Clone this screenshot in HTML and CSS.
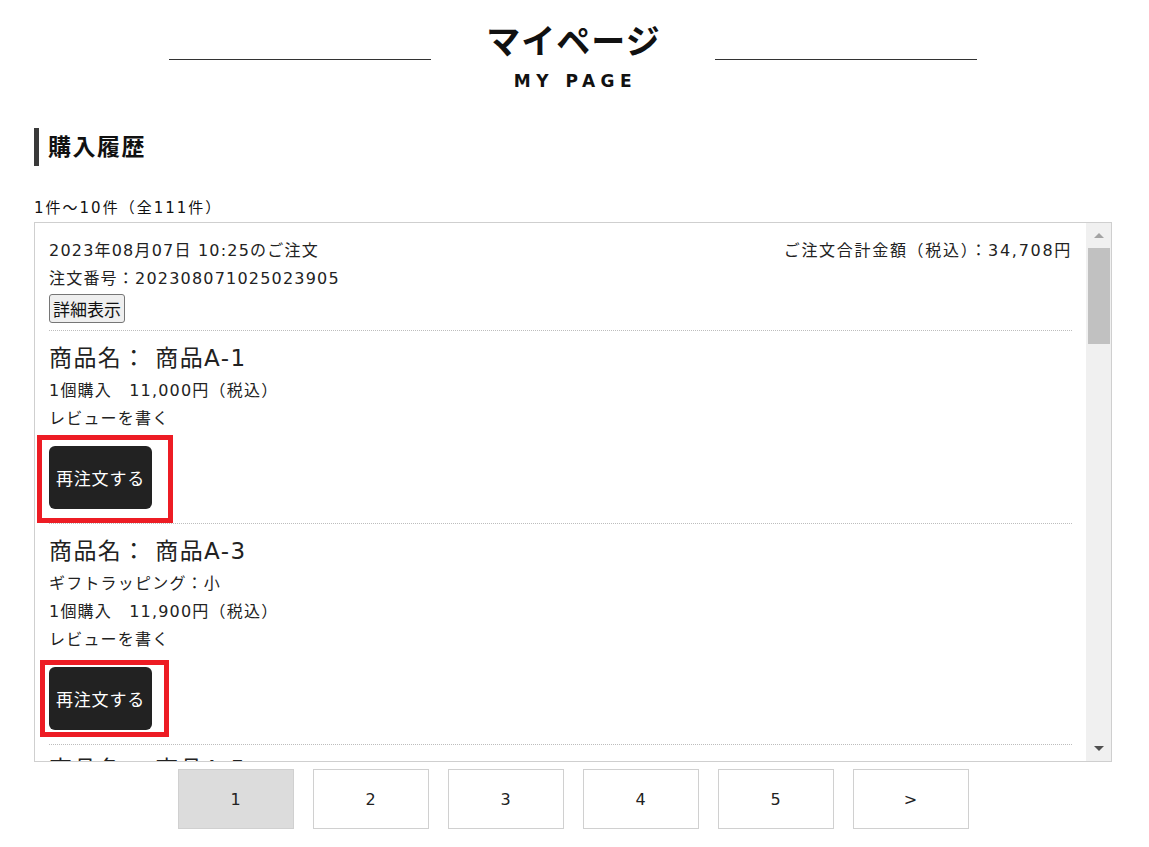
FILE: index.html
```html
<!DOCTYPE html>
<html lang="ja">
<head>
<meta charset="utf-8">
<title>マイページ</title>
<link rel="stylesheet" href="styles.css">
</head>
<body>
<div class="page">
  <header class="page-title">
    <span class="rule"></span>
    <div class="title-text">
      <h1>マイページ</h1>
      <p class="title-en">MY PAGE</p>
    </div>
    <span class="rule"></span>
  </header>

  <h2 class="section-head">購入履歴</h2>
  <p class="count">1件～10件（全111件）</p>

  <div class="history">
    <div class="history-scroll">
      <div class="order">
        <div class="order-head">
          <div class="order-meta">
            <p>2023年08月07日 10:25のご注文</p>
            <p>注文番号：202308071025023905</p>
            <button class="detail-btn" type="button">詳細表示</button>
          </div>
          <p class="order-total">ご注文合計金額（税込）：34,708円</p>
        </div>

        <div class="item">
          <p class="item-name">商品名： 商品A-1</p>
          <p class="item-line">1個購入　11,000円（税込）</p>
          <p class="item-line">レビューを書く</p>
          <div class="reorder-wrap">
            <button class="reorder" type="button">再注文する</button>
            <span class="mark mark-1"></span>
          </div>
        </div>

        <div class="item">
          <p class="item-name">商品名： 商品A-3</p>
          <p class="item-line">ギフトラッピング：小</p>
          <p class="item-line">1個購入　11,900円（税込）</p>
          <p class="item-line">レビューを書く</p>
          <div class="reorder-wrap">
            <button class="reorder" type="button">再注文する</button>
            <span class="mark mark-2"></span>
          </div>
        </div>

        <div class="item item-next">
          <p class="item-name">商品名： 商品A-5</p>
        </div>
      </div>
    </div>
    <div class="scrollbar">
      <div class="sb-btn"><span class="arrow-up"></span></div>
      <div class="sb-track"><div class="sb-thumb"></div></div>
      <div class="sb-btn"><span class="arrow-down"></span></div>
    </div>
  </div>

  <nav class="pager">
    <a class="page-link is-current">1</a>
    <a class="page-link">2</a>
    <a class="page-link">3</a>
    <a class="page-link">4</a>
    <a class="page-link">5</a>
    <a class="page-link">&gt;</a>
  </nav>
</div>
</body>
</html>
```

FILE: styles.css
```css
* {
  box-sizing: border-box;
}

html, body {
  margin: 0;
  padding: 0;
  background: #fff;
}

body {
  font-family: "DejaVu Sans", "Noto Sans CJK JP", sans-serif;
  color: #222;
  font-size: 16px;
}

p, h1, h2 {
  margin: 0;
}

.page {
  padding: 0 37px 0 34px;
}

/* Title */
.page-title {
  display: grid;
  grid-template-columns: 262px auto 262px;
  column-gap: 54px;
  justify-content: center;
  padding-top: 20px;
}

.rule {
  align-self: start;
  margin-top: 39px;
  height: 1px;
  background: #333;
}

.title-text {
  text-align: center;
}

.title-text h1 {
  font-family: "Noto Sans CJK JP", sans-serif;
  font-size: 34px;
  line-height: 40px;
  font-weight: 700;
  letter-spacing: 1px;
  padding-left: 1px;
  color: #111;
}

.title-en {
  margin-top: 9px;
  font-size: 17px;
  line-height: 24px;
  font-weight: 700;
  letter-spacing: 5.5px;
  padding-left: 5px;
  color: #111;
}

/* Section heading */
.section-head {
  margin-top: 35px;
  height: 38px;
  border-left: 5px solid #3a3a3a;
  padding-left: 9px;
  padding-bottom: 4px;
  font-family: "Noto Sans CJK JP", sans-serif;
  font-size: 23px;
  line-height: 34px;
  font-weight: 700;
  letter-spacing: 1.5px;
  color: #111;
}

.count {
  margin-top: 32px;
  margin-bottom: 4px;
  font-size: 15px;
  line-height: 20px;
  letter-spacing: 2px;
  color: #111;
}

/* History box */
.history {
  display: flex;
  height: 540px;
  border: 1px solid #cfcfcf;
}

.history-scroll {
  flex: 1;
  overflow: hidden;
  padding: 0 14px;
}

.order-head {
  display: flex;
  justify-content: space-between;
  padding-top: 14px;
  padding-bottom: 7px;
  letter-spacing: 1.2px;
  line-height: 28px;
}

.order-total {
  letter-spacing: 1.7px;
}

.detail-btn {
  display: block;
  margin-top: 1px;
  height: 29px;
  padding: 0 3px;
  font-family: "Noto Sans CJK JP", sans-serif;
  font-size: 17px;
  line-height: 27px;
  color: #111;
  background: #efefef;
  border: 1px solid #767676;
  border-radius: 3px;
}

.item {
  border-top: 1px dotted #bdbdbd;
  padding: 12px 0 14px;
}

.item-name {
  font-size: 23px;
  line-height: 30px;
  letter-spacing: 1.4px;
  margin-bottom: 4px;
}

.item-line {
  line-height: 28px;
  letter-spacing: 1.2px;
}

.reorder-wrap {
  position: relative;
  width: 103px;
  margin-top: 13px;
}

.reorder {
  display: block;
  width: 103px;
  height: 63px;
  padding: 0;
  border: 0;
  border-radius: 6px;
  background: #222;
  color: #fff;
  font-family: "Noto Sans CJK JP", sans-serif;
  font-size: 17px;
  letter-spacing: 0.8px;
}

.mark {
  position: absolute;
  border: 5px solid #ed1c24;
  pointer-events: none;
}

.mark-1 {
  left: -12px;
  top: -11px;
  right: -21px;
  bottom: -14px;
}

.mark-2 {
  left: -9px;
  top: -7px;
  right: -17px;
  bottom: -7px;
}

.item-next {
  padding-top: 9px;
}

/* Fake scrollbar */
.scrollbar {
  width: 25px;
  flex: none;
  display: flex;
  flex-direction: column;
  background: #f0f0f0;
}

.sb-btn {
  height: 25px;
  display: flex;
  align-items: center;
  justify-content: center;
}

.arrow-up {
  width: 0;
  height: 0;
  border-left: 5px solid transparent;
  border-right: 5px solid transparent;
  border-bottom: 5px solid #a3a3a3;
}

.arrow-down {
  width: 0;
  height: 0;
  border-left: 5px solid transparent;
  border-right: 5px solid transparent;
  border-top: 5px solid #505050;
}

.sb-track {
  flex: 1;
}

.sb-thumb {
  height: 96px;
  margin: 0 1px 0 2px;
  background: #c1c1c1;
}

/* Pager */
.pager {
  display: flex;
  justify-content: center;
  gap: 19px;
  margin-top: 7px;
}

.page-link {
  width: 116px;
  height: 60px;
  display: flex;
  align-items: center;
  justify-content: center;
  border: 1px solid #d0d0d0;
  font-size: 16px;
  color: #222;
}

.page-link.is-current {
  background: #dcdcdc;
}
```
